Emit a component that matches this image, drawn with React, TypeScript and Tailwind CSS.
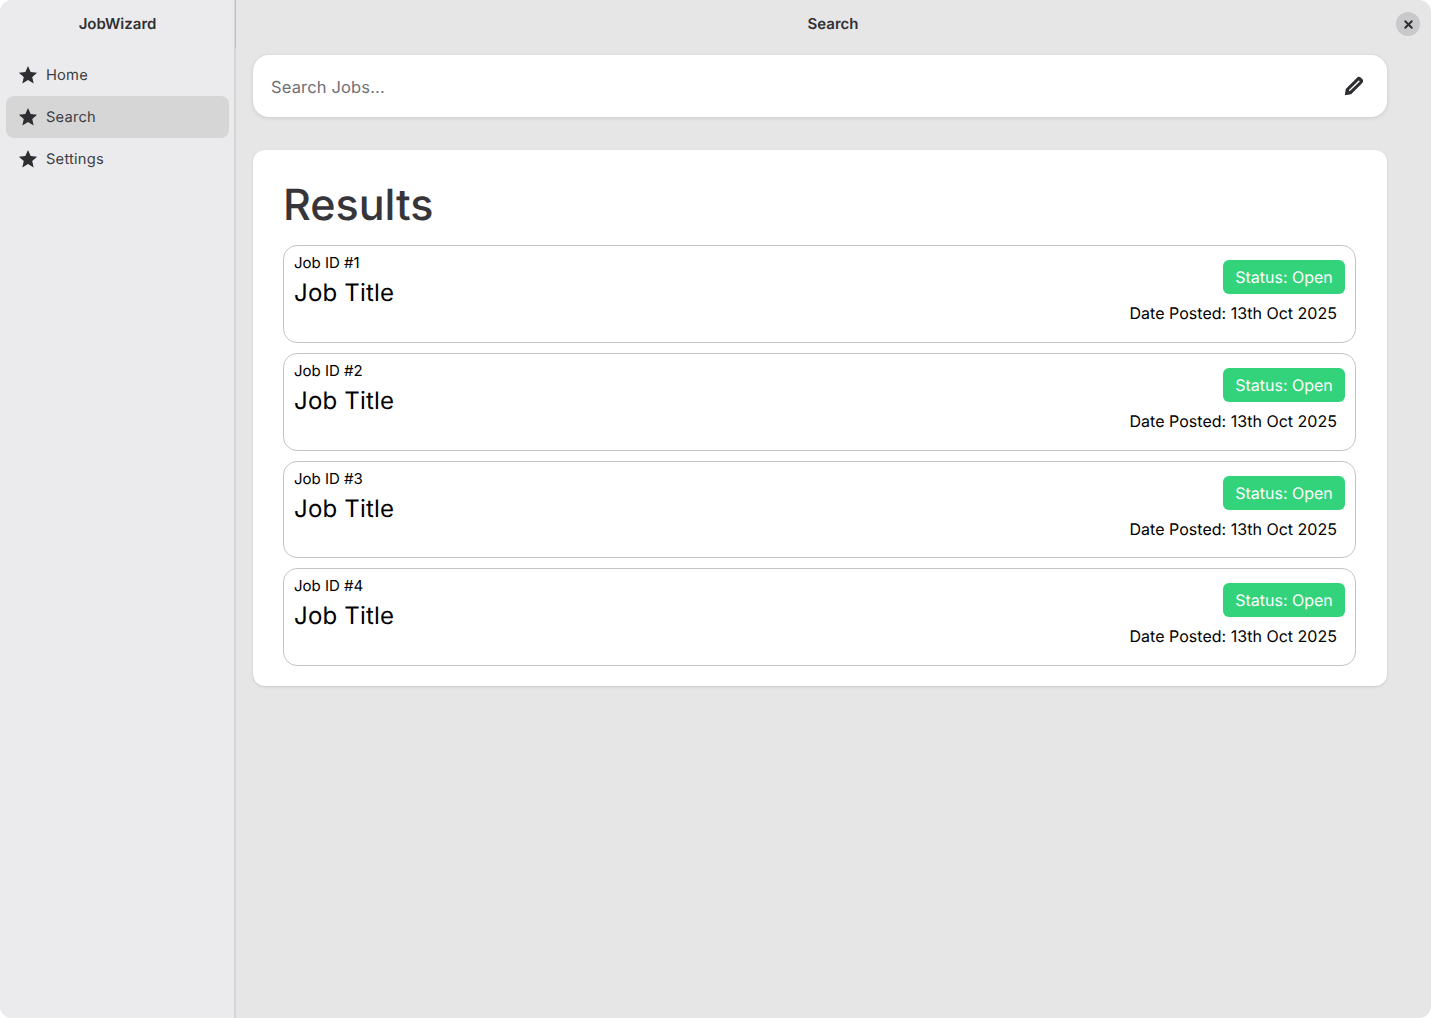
import { X } from 'lucide-react';

const font = { fontFamily: 'Inter, sans-serif' };

function Star() {
  return (
    <svg viewBox="0 0 24 24" width="22" height="22" className="text-[#2e2e32] shrink-0 -ml-[1px]">
      <path fill="currentColor" d="M12 2.200l2.900 6.600 7.100.7-5.400 4.700 1.600 7-6.200-3.700-6.200 3.700 1.600-7L2 9.500l7.100-.7z" />
    </svg>
  );
}

function Pencil() {
  return (
    <svg viewBox="0 0 24 24" width="22" height="22" className="text-[#2e2e32]">
      <path
        fill="currentColor"
        fillRule="evenodd"
        d="M2 22l1-6.800L15 3.200a3.400 3.400 0 0 1 4.800 0l1 1a3.400 3.400 0 0 1 0 4.800L8.800 21zM6.800 16.200l-.4 1.400 1.400-.4L18 7.400a.6.600 0 0 0 0-.8l-.4-.4a.6.600 0 0 0-.8 0z"
      />
    </svg>
  );
}

function NavItem({ label, active }: { label: string; active?: boolean }) {
  return (
    <div className={`h-[42px] flex items-center gap-[7px] pl-[12px] rounded-[8px] text-[14.7px] text-[#3d3d42] ${active ? 'bg-[#d6d6d6]' : ''}`}>
      <Star />
      <span className="tracking-[0.2px] pt-[1px]">{label}</span>
    </div>
  );
}

function JobCard({ id }: { id: number }) {
  return (
    <div className="h-[97.75px] rounded-[14px] border border-[#c4c4c4] flex justify-between px-[10px] pt-[6px] text-black">
      <div>
        <div className="text-[15px] leading-[21px]">Job ID #{id}</div>
        <div className="text-[24px] leading-[40.4px] tracking-[0.2px]">Job Title</div>
      </div>
      <div className="flex flex-col items-end pt-[8px]">
        <div className="h-[34px] w-[122px] rounded-[6px] bg-[#33d37c] text-white text-[16px] flex items-center justify-center">Status: Open</div>
        <div className="text-[16px] leading-[24px] mt-[7px] mr-[8px] tracking-[0.02px]">Date Posted: 13th Oct 2025</div>
      </div>
    </div>
  );
}

export default function App() {
  return (
    <div style={font} className="w-[1432px] h-[1018px] bg-white overflow-hidden [text-rendering:geometricPrecision]">
      <div className="w-[1431px] h-[1018px] rounded-[12px] bg-[#e6e6e6] flex overflow-hidden">
        <aside className="w-[236px] shrink-0 bg-[#ebebed] border-r-2 border-[#d6d6d6] pl-[6px] pr-[5px]">
          <div className="h-[48px] mb-[6px] flex items-center justify-center text-[15px] font-semibold text-[#303034]">JobWizard</div>
          <nav>
            <NavItem label="Home" />
            <NavItem label="Search" active />
            <NavItem label="Settings" />
          </nav>
        </aside>
        <main className="flex-1 min-w-0">
          <header className="h-[48px] -ml-[1px] border-l border-[#bebebe] relative flex items-center justify-center text-[15px] font-semibold text-[#303034] pr-[1px]">
            Search
            <button className="absolute right-[11px] top-[12px] w-[24px] h-[24px] rounded-full bg-[#c9c9cb] flex items-center justify-center text-[#2e2e32]">
              <X size={13} strokeWidth={3.6} />
            </button>
          </header>
          <div className="pl-[17px] pr-[44px] pt-[7px]">
            <div className="h-[62px] bg-white rounded-[16px] shadow-[0_1px_4px_rgba(0,0,0,0.12)] flex items-center justify-between pl-[18px] pr-[22px]">
              <span className="text-[16.5px] text-[#707074] tracking-[0.15px] pt-[2px]">Search Jobs...</span>
              <Pencil />
            </div>
            <section className="mt-[33px] bg-white rounded-[12px] shadow-[0_1px_3px_rgba(0,0,0,0.12)] pl-[30px] pr-[31px] pt-[25px] pb-[20px]">
              <h1 className="text-[43px] leading-[60px] font-medium text-[#36363a] mb-[10px]">Results</h1>
              <div className="flex flex-col gap-[10px]">
                {[1, 2, 3, 4].map((id) => (
                  <JobCard key={id} id={id} />
                ))}
              </div>
            </section>
          </div>
        </main>
      </div>
    </div>
  );
}
